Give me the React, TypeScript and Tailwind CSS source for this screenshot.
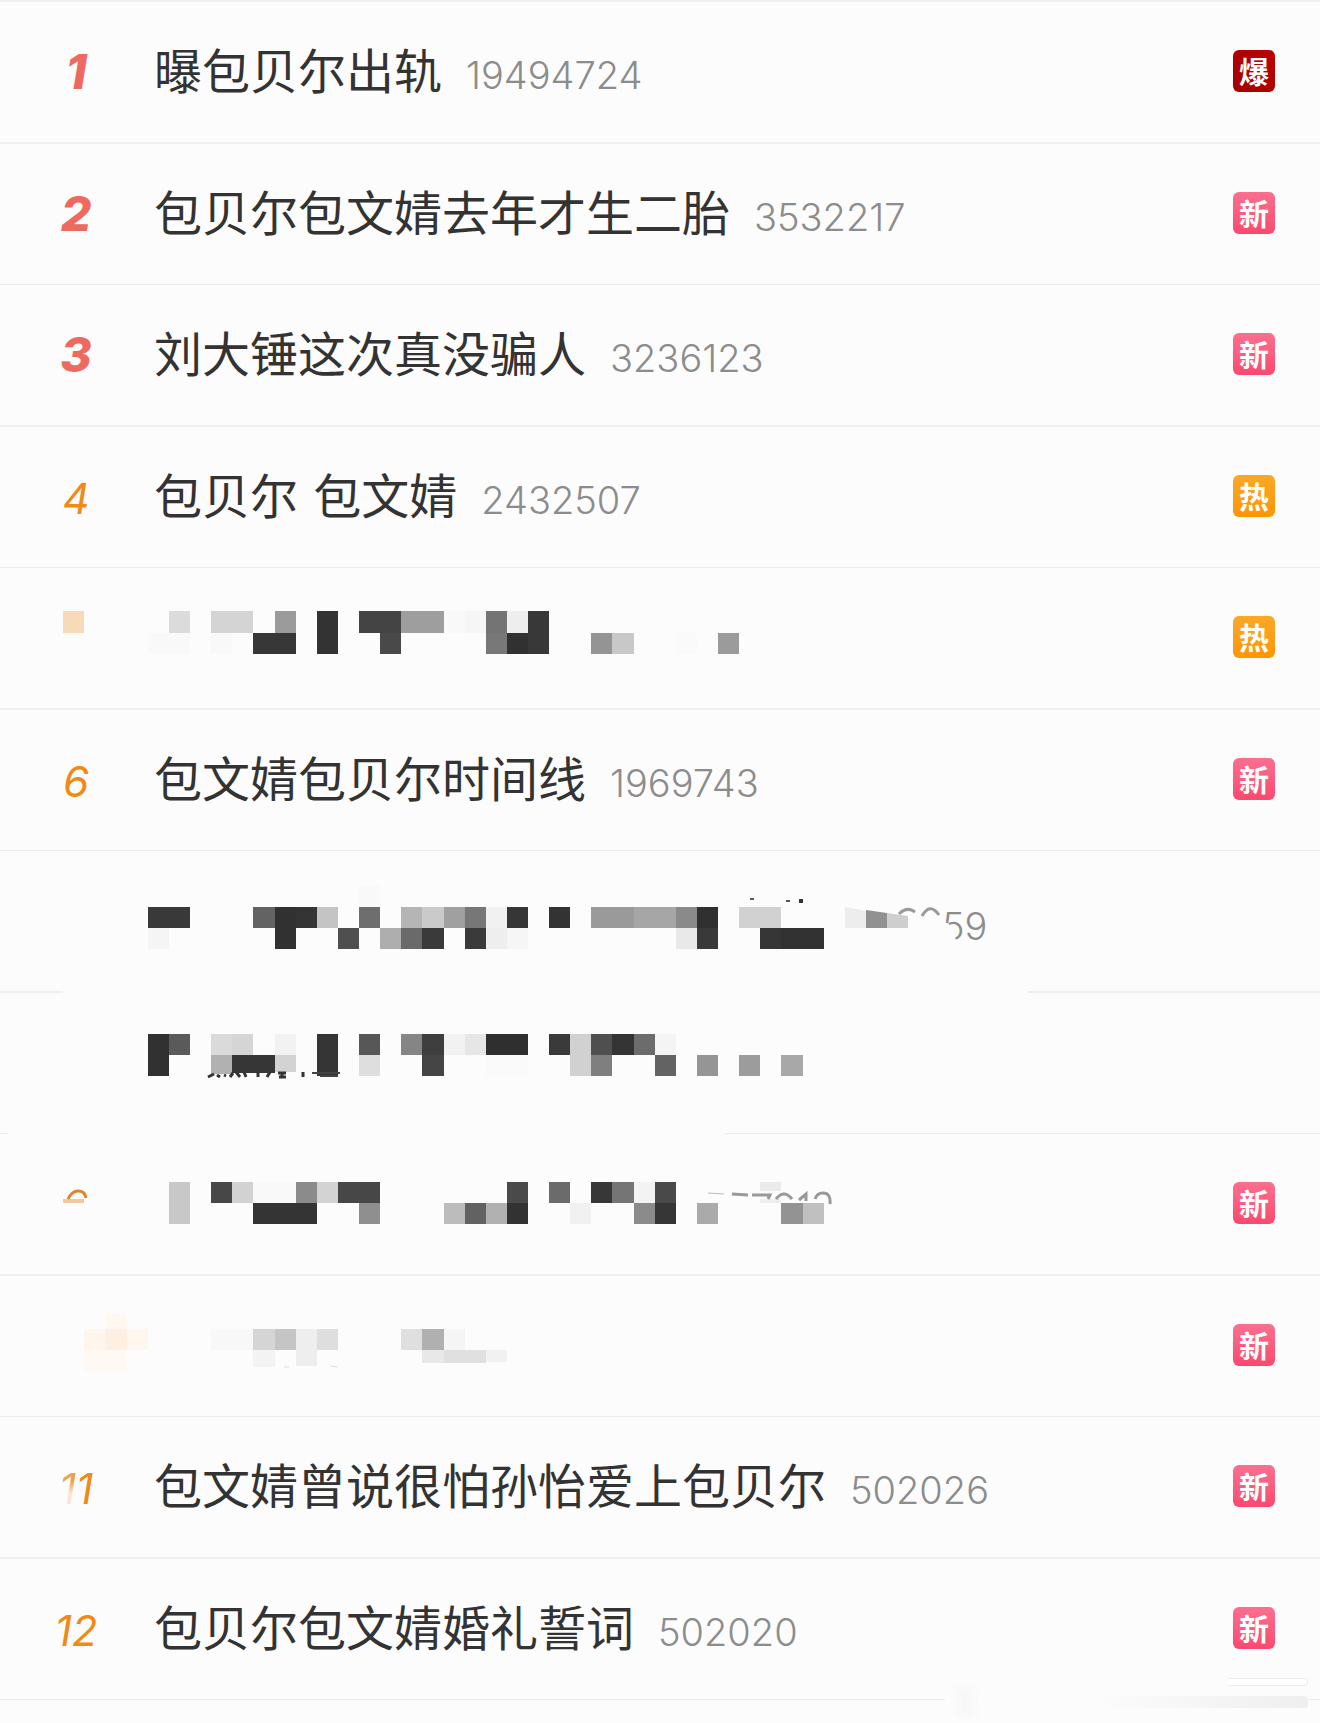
import React from 'react';

type Tag = 'boom' | 'new' | 'hot';

// [first column, columns, y, height, fill]
type Cell = [number, number, number, number, string];

type Topic = {
  rank: number;
  title?: string;
  count?: string;
  tag?: Tag;
  mask?: React.ReactNode;
};

const PAPER = '#fcfcfc';
const CELL = 21.12;

const TAGS: Record<Tag, { label: string; className: string }> = {
  boom: { label: '爆', className: 'bg-linear-to-tr from-[#a30000] to-[#bb0202]' },
  new: { label: '新', className: 'bg-linear-to-t from-[#fb4870] to-[#fa6f8f]' },
  hot: { label: '热', className: 'bg-linear-to-t from-[#ff9500] to-[#f9a825]' },
};

const col = (n: number) => Math.round(n * CELL);

function Mosaic({ cells, children }: { cells: Cell[]; children?: React.ReactNode }) {
  return (
    <svg
      className="pointer-events-none absolute left-0 top-0 overflow-visible"
      width="1040"
      height="140"
      viewBox="0 0 1040 140"
      fill="none"
      aria-hidden="true"
    >
      <g shapeRendering="crispEdges">
        {cells.map(([start, span, y, height, fill]) => (
          <rect key={`${start}-${y}`} x={col(start)} y={y} width={col(start + span) - col(start)} height={height} fill={fill} />
        ))}
      </g>
      {children}
    </svg>
  );
}

const ROW_5: Cell[] = [
  [3, 1, 43, 22, '#f7dab8'],
  [8, 1, 43, 22, '#dbdbdb'],
  [10, 2, 43, 22, '#d4d4d4'],
  [13, 1, 43, 22, '#9b9b9b'],
  [15, 1, 43, 43, '#333333'],
  [17, 2, 43, 22, '#444444'],
  [19, 2, 43, 22, '#9e9e9e'],
  [21, 1, 43, 22, '#f9f9f9'],
  [22, 1, 43, 22, '#f6f6f6'],
  [23, 1, 43, 22, '#747474'],
  [24, 1, 43, 22, '#eeeeee'],
  [25, 1, 43, 43, '#383838'],
  [7, 2, 65, 21, '#f9f9f9'],
  [10, 1, 65, 21, '#f9f9f9'],
  [12, 2, 65, 21, '#373737'],
  [18, 1, 65, 21, '#494949'],
  [23, 1, 65, 21, '#787878'],
  [24, 1, 65, 21, '#313131'],
  [28, 1, 65, 21, '#949494'],
  [29, 1, 65, 21, '#c8c8c8'],
  [32, 1, 65, 21, '#fafafa'],
  [34, 1, 65, 21, '#9b9b9b'],
];

const ROW_7: Cell[] = [
  [17, 1, 35, 21, '#f9f9f9'],
  [7, 2, 56, 21, '#393939'],
  [12, 1, 56, 21, '#636363'],
  [13, 1, 56, 42, '#313131'],
  [14, 1, 56, 21, '#343434'],
  [15, 1, 56, 21, '#c4c4c4'],
  [17, 1, 56, 21, '#6e6e6e'],
  [19, 1, 56, 21, '#b5b5b5'],
  [20, 1, 56, 21, '#cacaca'],
  [21, 1, 56, 21, '#a0a0a0'],
  [22, 1, 56, 21, '#777777'],
  [23, 1, 56, 21, '#f1f1f1'],
  [24, 1, 56, 21, '#363636'],
  [26, 1, 56, 21, '#333333'],
  [28, 2, 56, 21, '#9a9a9a'],
  [30, 2, 56, 21, '#a6a6a6'],
  [32, 1, 56, 21, '#8a8a8a'],
  [33, 1, 56, 21, '#303030'],
  [35, 2, 56, 21, '#d1d1d1'],
  [7, 1, 77, 21, '#f5f5f5'],
  [16, 1, 77, 21, '#4f4f4f'],
  [18, 1, 77, 21, '#aeaeae'],
  [19, 1, 77, 21, '#6a6a6a'],
  [20, 1, 77, 21, '#3a3a3a'],
  [22, 1, 77, 21, '#3a3a3a'],
  [23, 1, 77, 21, '#eeeeee'],
  [24, 1, 77, 21, '#f6f6f6'],
  [32, 1, 77, 21, '#e9e9e9'],
  [33, 1, 77, 21, '#393939'],
  [36, 1, 77, 21, '#363636'],
  [37, 2, 77, 21, '#323232'],
];

const ROW_8: Cell[] = [
  [7, 1, 41, 42, '#313131'],
  [8, 1, 41, 21, '#5a5a5a'],
  [10, 1, 41, 21, '#dadada'],
  [11, 1, 41, 21, '#d5d5d5'],
  [13, 1, 41, 21, '#f2f2f2'],
  [15, 1, 41, 42, '#353535'],
  [17, 1, 41, 21, '#575757'],
  [19, 1, 41, 21, '#858585'],
  [20, 1, 41, 21, '#3e3e3e'],
  [21, 1, 41, 21, '#f2f2f2'],
  [22, 1, 41, 21, '#e6e6e6'],
  [23, 2, 41, 21, '#2f2f2f'],
  [26, 1, 41, 21, '#3a3a3a'],
  [27, 1, 41, 42, '#d1d1d1'],
  [28, 1, 41, 21, '#4f4f4f'],
  [29, 1, 41, 21, '#343434'],
  [30, 1, 41, 21, '#6c6c6c'],
  [31, 1, 41, 21, '#f4f4f4'],
  [10, 1, 62, 19, '#b1b1b1'],
  [11, 2, 62, 18, '#363636'],
  [13, 1, 62, 17, '#d3d3d3'],
  [17, 1, 62, 21, '#dedede'],
  [20, 1, 62, 21, '#454545'],
  [23, 2, 62, 21, '#fafafa'],
  [28, 1, 62, 21, '#7f7f7f'],
  [31, 1, 62, 21, '#636363'],
  [33, 1, 62, 21, '#959595'],
  [35, 1, 62, 21, '#9c9c9c'],
  [37, 1, 62, 21, '#a8a8a8'],
];

const ROW_9: Cell[] = [
  [3, 1, 65, 4, '#f5c79c'],
  [8, 1, 48, 42, '#c8c8c8'],
  [10, 1, 48, 21, '#474747'],
  [11, 1, 48, 21, '#d2d2d2'],
  [12, 2, 48, 21, '#f9f9f9'],
  [14, 1, 48, 21, '#8b8b8b'],
  [15, 1, 48, 21, '#d3d3d3'],
  [16, 2, 48, 21, '#474747'],
  [24, 1, 48, 21, '#4a4a4a'],
  [26, 1, 48, 21, '#6b6b6b'],
  [28, 1, 48, 21, '#373737'],
  [29, 1, 48, 21, '#757575'],
  [30, 1, 48, 21, '#f3f3f3'],
  [31, 1, 48, 21, '#494949'],
  [36, 1, 48, 9, '#ebebeb'],
  [36, 1, 65, 4, '#eeeeee'],
  [12, 3, 69, 21, '#343434'],
  [17, 1, 69, 21, '#8f8f8f'],
  [21, 1, 69, 21, '#bcbcbc'],
  [22, 1, 69, 21, '#626262'],
  [23, 1, 69, 21, '#b1b1b1'],
  [24, 1, 69, 21, '#323232'],
  [27, 1, 69, 21, '#f1f1f1'],
  [30, 1, 69, 21, '#8b8b8b'],
  [31, 1, 69, 21, '#363636'],
  [33, 1, 69, 21, '#aaaaaa'],
  [37, 1, 69, 21, '#939393'],
  [38, 1, 69, 21, '#c0c0c0'],
];

const ROW_10: Cell[] = [
  [5, 1, 37, 16, '#fef8f1'],
  [4, 1, 53, 21, '#fef6ec'],
  [5, 1, 53, 21, '#fdf0e2'],
  [6, 1, 53, 21, '#fef7ed'],
  [4, 2, 74, 21, '#fef9f2'],
  [10, 2, 53, 21, '#f8f8f8'],
  [12, 1, 53, 21, '#d5d5d5'],
  [13, 1, 53, 21, '#c5c5c5'],
  [14, 1, 53, 37, '#eeeeee'],
  [15, 1, 53, 21, '#dedede'],
  [19, 1, 53, 21, '#dfdfdf'],
  [20, 1, 53, 21, '#b0b0b0'],
  [21, 1, 53, 21, '#f5f5f5'],
  [12, 1, 74, 17, '#f3f3f3'],
  [20, 1, 74, 13, '#e8e8e8'],
  [21, 2, 74, 13, '#e0e0e0'],
  [23, 1, 74, 12, '#f1f1f1'],
];

const TOPICS: Topic[] = [
  { rank: 1, title: '曝包贝尔出轨', count: '19494724', tag: 'boom' },
  { rank: 2, title: '包贝尔包文婧去年才生二胎', count: '3532217', tag: 'new' },
  { rank: 3, title: '刘大锤这次真没骗人', count: '3236123', tag: 'new' },
  { rank: 4, title: '包贝尔 包文婧', count: '2432507', tag: 'hot' },
  { rank: 5, tag: 'hot', mask: <Mosaic cells={ROW_5} /> },
  { rank: 6, title: '包文婧包贝尔时间线', count: '1969743', tag: 'new' },
  {
    rank: 7,
    count: '59',
    mask: (
      <Mosaic cells={ROW_7}>
        {/* brushed-out lower half of the 5 */}
        <path d="M936 72h12l6 8 2 10v10h-22z" fill={PAPER} />
        <path d="M845 56l21 4v17h-21z" fill="#ededed" />
        <path d="M866 59l21 3v15h-21z" fill="#919191" />
        <path d="M887 62l21 3v12h-21z" fill="#cecece" />
        <path d="M899 63q8-8 16-2M922 65q8-14 17-1" stroke="#9a9a9a" strokeWidth="3" />
        <path d="M750 48h4M786 50h4" stroke="#555" strokeWidth="2" />
        <path d="M799 48h4v4h-4z" fill="#333" />
        <path d="M63 137h964v8H63z" fill={PAPER} />
      </Mosaic>
    ),
  },
  {
    rank: 8,
    mask: (
      <Mosaic cells={ROW_8}>
        <path
          d="M208 84l6-3M217 82l3 2M224 82l2 1M230 84l3-4M236 79l4 5M244 79l2 5M258 79v5M270 79l-3 5M278 80h8M279 84h7M282 79v5M303 79v5"
          stroke="#333"
          strokeWidth="3"
        />
        <path d="M312 80h28M320 83h18" stroke="#444" strokeWidth="2" />
        <path d="M8 137h717v6H8z" fill={PAPER} />
      </Mosaic>
    ),
  },
  {
    rank: 9,
    tag: 'new',
    mask: (
      <Mosaic cells={ROW_9}>
        <path d="M68 65q4-8 10-8 7 0 8 7" stroke="#dc8631" strokeWidth="3" />
        <path d="M708 59l16 1" stroke="#bbb" strokeWidth="1" />
        <path d="M732 60l16 1M752 61h18l-2 4M776 65q8-10 16 0M799 66l7-6v7M815 65q2-6 8-6 8 0 7 11" stroke="#999" strokeWidth="3" />
      </Mosaic>
    ),
  },
  {
    rank: 10,
    tag: 'new',
    mask: (
      <Mosaic cells={ROW_10}>
        <path d="M284 91h5M330 90l8 1" stroke="#ddd" strokeWidth="1" />
      </Mosaic>
    ),
  },
  { rank: 11, title: '包文婧曾说很怕孙怡爱上包贝尔', count: '502026', tag: 'new' },
  { rank: 12, title: '包贝尔包文婧婚礼誓词', count: '502020', tag: 'new' },
];

function Rank({ value }: { value: number }) {
  if (value <= 3) {
    return <span className="text-[48px] font-extrabold italic text-[#ee6a60]">{value}</span>;
  }
  if (value === 11) {
    return (
      <span className="text-[42px] italic text-[#ef8a17]">
        <span className="bg-linear-to-b from-[#f0a04a] from-35% to-[#fbe6d2] to-60% bg-clip-text text-transparent">1</span>1
      </span>
    );
  }
  return <span className="text-[42px] italic text-[#ef8a17]">{value}</span>;
}

function TopicRow({ topic }: { topic: Topic }) {
  const tag = topic.tag && TAGS[topic.tag];

  return (
    <li className="relative flex h-[141px] items-center border-b border-[#ececec] pb-0.5 pr-[45px] odd:h-[142px] odd:border-b-2 odd:border-[#efefef]">
      <div className="flex min-w-0 flex-1 items-baseline pt-3 leading-[60px]">
        <span className="mr-0.5 w-[152px] shrink-0 text-center">{!topic.mask && <Rank value={topic.rank} />}</span>
        {topic.title && (
          <a
            href="#"
            className="whitespace-nowrap font-['DejaVu_Sans','Noto_Sans_CJK_SC',sans-serif] text-[48px] text-[#333333]"
          >
            {topic.title}
          </a>
        )}
        {topic.count && (
          <span className={`text-[38px] font-light text-[#8c8c8c] ${topic.mask ? 'ml-[788px]' : 'ml-6'}`}>{topic.count}</span>
        )}
      </div>
      {tag && (
        <span
          className={`grid size-[42px] shrink-0 place-items-center rounded-md pb-0.5 font-['Noto_Sans_CJK_SC',sans-serif] text-[30px] font-bold leading-10 text-white ${tag.className}`}
        >
          {tag.label}
        </span>
      )}
      {topic.mask}
    </li>
  );
}

export default function App() {
  return (
    <main className="min-h-screen bg-[#fcfcfc] font-['Inter','Noto_Sans_CJK_SC',sans-serif]">
      <ol className="border-t-2 border-[#efefef]">
        {TOPICS.map((topic) => (
          <TopicRow key={topic.rank} topic={topic} />
        ))}
      </ol>
      {/* smudge left over the last divider */}
      <div className="relative h-[23px]">
        <div className="absolute -top-6 right-3 h-9 w-[363px] bg-[#fcfcfc]">
          <div className="absolute left-3 top-3 h-7 w-4 bg-[#f7f7f7] blur-xs" />
          <div className="absolute right-0 top-0.5 h-2 w-20 rounded-r-sm border-y border-r border-[#ebebeb] bg-white" />
          <div className="absolute right-0 top-5 h-3 w-52 rounded-r-sm bg-linear-to-r from-[#fcfcfc] to-[#efefef]" />
        </div>
      </div>
    </main>
  );
}
